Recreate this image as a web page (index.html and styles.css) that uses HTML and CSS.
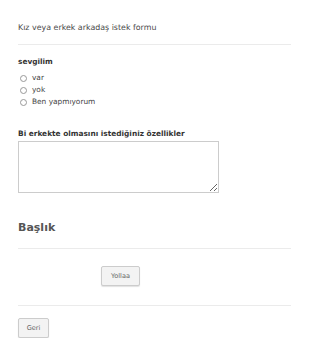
FILE: index.html
```html
<!doctype html>
<html lang="tr">
<head>
	<meta charset="UTF-8">
	<title>Kız veya erkek arkadaş istek formu</title>
	<link rel="stylesheet" href="styles.css">
</head>
<body>
	<form class="form">
		<div class="title">Kız veya erkek arkadaş istek formu</div>
		<div class="line"></div>

		<div class="label">sevgilim</div>
		<ul class="radios">
			<li><input type="radio" name="sevgilim"> var</li>
			<li><input type="radio" name="sevgilim"> yok</li>
			<li><input type="radio" name="sevgilim"> Ben yapmıyorum</li>
		</ul>

		<div class="label label2">Bi erkekte olmasını istediğiniz özellikler</div>
		<textarea class="area"></textarea>

		<div class="head">Başlık</div>
		<div class="line line2"></div>

		<div class="send"><button type="button" class="btn">Yollaa</button></div>
		<div class="line line3"></div>

		<button type="button" class="btn back">Geri</button>
	</form>
</body>
</html>
```

FILE: styles.css
```css
body{
	margin:0;
	background:#fff;
	font-family:"DejaVu Sans",Verdana,sans-serif;
	color:#555;
}
.form{
	width:273px;
	padding:21px 0 0 18px;
	margin:0;
}
.title{
	font-size:7.9px;
	line-height:14px;
	color:#4a4a4a;
}
.line{
	height:1px;
	background:#ebebeb;
	margin-top:9px;
}
.label{
	font-size:7.4px;
	font-weight:bold;
	color:#333;
	margin-top:12px;
	line-height:10px;
}
.radios{
	margin:5px 0 0 0;
	padding:0;
	list-style:none;
}
.radios li{
	height:12px;
	line-height:12px;
	font-size:7.4px;
	color:#444;
	display:flex;
	align-items:center;
}
.radios input{
	-webkit-appearance:none;
	appearance:none;
	width:7px;
	height:7px;
	border:1px solid #999;
	border-radius:50%;
	margin:0 5px 0 2px;
	box-sizing:border-box;
	background:#fff;
}
.label2{
	margin-top:21px;
}
.area{
	display:block;
	width:201px;
	height:52px;
	margin-top:2px;
	border:1px solid #ccc;
	box-sizing:border-box;
	resize:vertical;
}
.head{
	font-size:11px;
	font-weight:bold;
	color:#555;
	margin-top:28px;
	line-height:14px;
}
.line2{
	margin-top:13px;
}
.send{
	padding:17px 0 0 83px;
}
.btn{
	display:block;
	font-family:"DejaVu Sans",Verdana,sans-serif;
	font-size:6.6px;
	color:#666;
	background:#f3f3f3;
	border:1px solid #ccc;
	border-radius:2px;
	box-shadow:0 1px 1px rgba(0,0,0,0.12);
	height:20px;
	width:39px;
	padding:0;
}
.line3{
	margin-top:19px;
}
.back{
	width:31px;
	margin-top:12px;
}
```
